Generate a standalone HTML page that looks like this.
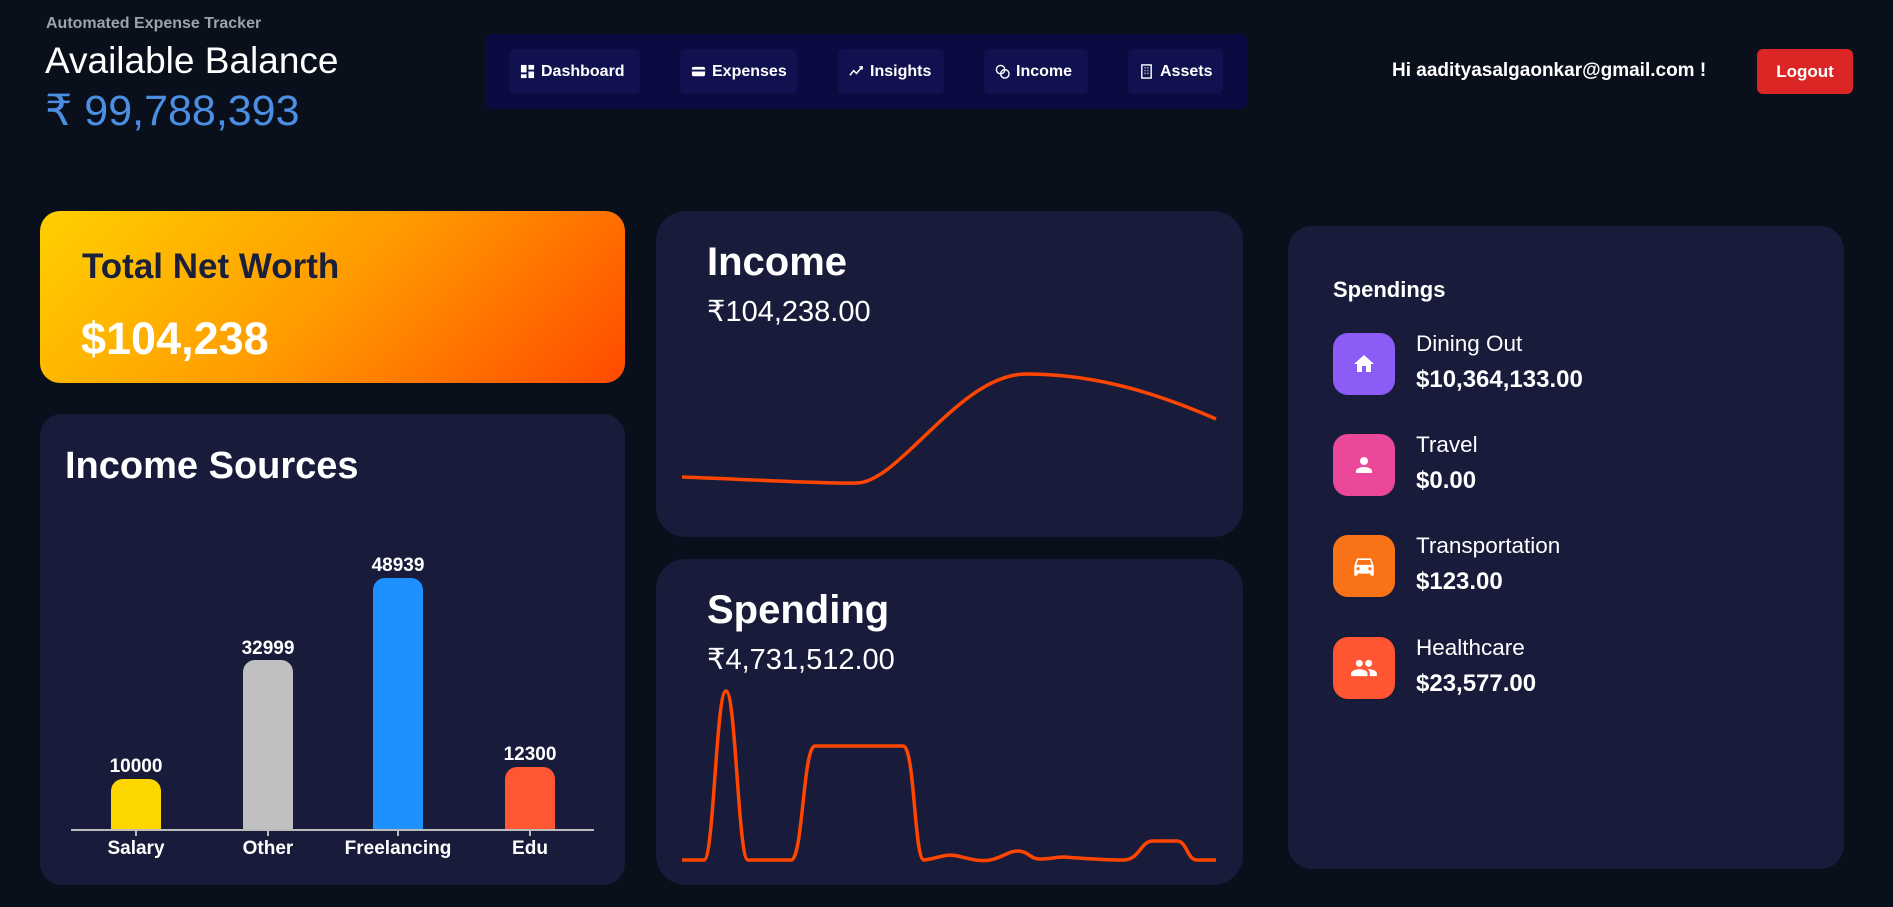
<!DOCTYPE html>
<html><head><meta charset="utf-8"><style>
*{margin:0;padding:0;box-sizing:border-box}
body{width:1893px;height:907px;background:#0a0f1c;font-family:"Liberation Sans",sans-serif;color:#fff;position:relative;overflow:hidden}
.abs{position:absolute}
.card{position:absolute;background:#181c3a}
.nav{left:485px;top:34px;width:762px;height:75px;background:#0b0b42;border-radius:6px}
.btn{position:absolute;top:15px;height:45px;background:#111150;border-radius:6px;font-size:16px;font-weight:bold;display:flex;align-items:center;padding-left:11px;gap:6px}
.btn svg{width:15px;height:15px}
.ic{position:absolute;left:1333px;width:62px;height:62px;border-radius:15px;display:flex;align-items:center;justify-content:center}
.lbl{position:absolute;left:1416px;font-size:22.5px}
.amt{position:absolute;left:1416px;font-size:24px;font-weight:bold}
</style></head><body>
<div class="abs" style="left:46px;top:15px;font-size:16px;font-weight:bold;color:#9ca3af">Automated Expense Tracker</div>
<div class="abs" style="left:45px;top:40px;font-size:37px">Available Balance</div>
<div class="abs" style="left:45px;top:86px;font-size:43px;color:#4a8fe2">₹ 99,788,393</div>

<div class="abs nav">
 <div class="btn" style="left:24px;width:131px"><svg viewBox="0 0 16 16" fill="#fff"><rect x="1" y="1" width="6" height="8"/><rect x="9" y="1" width="6" height="5"/><rect x="1" y="11" width="6" height="4"/><rect x="9" y="8" width="6" height="7"/></svg>Dashboard</div>
 <div class="btn" style="left:195px;width:117px"><svg viewBox="0 0 16 16"><rect x="1" y="3" width="14" height="10" rx="2" fill="#fff"/><rect x="1" y="6" width="14" height="2" fill="#111150"/></svg>Expenses</div>
 <div class="btn" style="left:353px;width:106px"><svg viewBox="0 0 16 16" fill="none" stroke="#fff" stroke-width="1.6"><path d="M1 12l4-5 3 3 6-7M11 3h3v3"/></svg>Insights</div>
 <div class="btn" style="left:499px;width:104px"><svg viewBox="0 0 16 16" fill="none" stroke="#fff" stroke-width="1.5"><circle cx="6" cy="6" r="4.5"/><circle cx="10.5" cy="10.5" r="4.5"/></svg>Income</div>
 <div class="btn" style="left:643px;width:95px"><svg viewBox="0 0 16 16" fill="none" stroke="#fff" stroke-width="1.5"><rect x="3" y="1" width="10" height="14"/><path d="M6 4h1M9 4h1M6 7h1M9 7h1M6 10h1M9 10h1"/></svg>Assets</div>
</div>
<div class="abs" style="left:1392px;top:60px;font-size:19px;font-weight:bold">Hi aadityasalgaonkar@gmail.com !</div>
<div class="abs" style="left:1757px;top:49px;width:96px;height:45px;background:#dc2626;border-radius:6px;font-size:17px;font-weight:bold;display:flex;align-items:center;justify-content:center">Logout</div>

<div class="card" style="left:40px;top:211px;width:585px;height:172px;border-radius:20px;background:linear-gradient(135deg,#ffd000 0%,#ff9a00 50%,#ff4a00 100%)">
 <div class="abs" style="left:42px;top:36px;font-size:35px;font-weight:bold;color:#1a1f3a">Total Net Worth</div>
 <div class="abs" style="left:41px;top:102px;font-size:45px;font-weight:bold">$104,238</div>
</div>

<div class="card" style="left:40px;top:414px;width:585px;height:471px;border-radius:22px">
 <div class="abs" style="left:25px;top:31px;font-size:38px;font-weight:bold">Income Sources</div>
</div>
<svg class="abs" style="left:0;top:0" width="700" height="907">
 <g font-family="Liberation Sans" font-weight="bold" font-size="19" fill="#fff" text-anchor="middle">
 <path d="M111 829V791a12 12 0 0 1 12-12h26a12 12 0 0 1 12 12V829Z" fill="#ffd700"/>
 <path d="M243 829V672a12 12 0 0 1 12-12h26a12 12 0 0 1 12 12V829Z" fill="#c0c0c0"/>
 <path d="M373 829V590a12 12 0 0 1 12-12h26a12 12 0 0 1 12 12V829Z" fill="#1e90ff"/>
 <path d="M505 829V779a12 12 0 0 1 12-12h26a12 12 0 0 1 12 12V829Z" fill="#ff5733"/>
 <path d="M71 830H594M136 830v6M268 830v6M398 830v6M530 830v6" stroke="#bbb" stroke-width="2"/>
 <text x="136" y="772">10000</text><text x="268" y="654">32999</text><text x="398" y="571">48939</text><text x="530" y="760">12300</text>
 <text x="136" y="854">Salary</text><text x="268" y="854">Other</text><text x="398" y="854">Freelancing</text><text x="530" y="854">Edu</text>
 </g>
</svg>

<div class="card" style="left:656px;top:211px;width:587px;height:326px;border-radius:30px">
 <div class="abs" style="left:51px;top:29px;font-size:40px;font-weight:bold">Income</div>
 <div class="abs" style="left:51px;top:83px;font-size:29px">₹104,238.00</div>
</div>
<div class="card" style="left:656px;top:559px;width:587px;height:326px;border-radius:30px">
 <div class="abs" style="left:51px;top:29px;font-size:40px;font-weight:bold">Spending</div>
 <div class="abs" style="left:51px;top:83px;font-size:29px">₹4,731,512.00</div>
</div>
<svg class="abs" style="left:0;top:0" width="1893" height="907" fill="none" stroke="#ff4500" stroke-width="3.5">
 <path d="M682 477C760 480 830 484 857 483C900 482 960 374 1026 374C1090 374 1150 390 1216 419"/>
 <path d="M682 860L704 860C714 860 716 691 726 691C736 691 738 860 748 860L791 860C803 860 803 746 815 746L903 746C915 746 914 860 924 860C940 858 945 853 958 856C970 859 980 862 990 860C1002 858 1008 851 1018 851C1028 851 1030 859 1040 859C1050 859 1055 857 1064 857C1080 858 1100 860 1123 860C1140 860 1140 841 1153 841L1177 841C1187 841 1187 860 1197 860L1216 860"/>
</svg>

<div class="card" style="left:1288px;top:226px;width:556px;height:643px;border-radius:24px">
 <div class="abs" style="left:45px;top:51px;font-size:22px;font-weight:bold">Spendings</div>
</div>
<div class="ic" style="top:333px;background:#8b5cf6"><svg width="24" height="24" viewBox="0 0 24 24" fill="#fff"><path d="M10 20v-6h4v6h5v-8h3L12 3 2 12h3v8z"/></svg></div>
<div class="lbl" style="top:331px">Dining Out</div><div class="amt" style="top:366px">$10,364,133.00</div>
<div class="ic" style="top:434px;background:#ec4899"><svg width="24" height="24" viewBox="0 0 24 24" fill="#fff"><path d="M12 12a4 4 0 1 0 0-8 4 4 0 0 0 0 8zm0 2c-2.7 0-8 1.3-8 4v2h16v-2c0-2.7-5.3-4-8-4z"/></svg></div>
<div class="lbl" style="top:432px">Travel</div><div class="amt" style="top:467px">$0.00</div>
<div class="ic" style="top:535px;background:#f97316"><svg width="26" height="26" viewBox="0 0 24 24" fill="#fff"><path d="M18.9 6C18.7 5.4 18.1 5 17.5 5h-11c-.7 0-1.2.4-1.4 1L3 12v8c0 .6.4 1 1 1h1c.6 0 1-.4 1-1v-1h12v1c0 .6.4 1 1 1h1c.6 0 1-.4 1-1v-8l-2.1-6zM6.5 16a1.5 1.5 0 1 1 0-3 1.5 1.5 0 0 1 0 3zm11 0a1.5 1.5 0 1 1 0-3 1.5 1.5 0 0 1 0 3zM5 11l1.5-4.5h11L19 11H5z"/></svg></div>
<div class="lbl" style="top:533px">Transportation</div><div class="amt" style="top:568px">$123.00</div>
<div class="ic" style="top:637px;background:#ff5533"><svg width="28" height="28" viewBox="0 0 24 24" fill="#fff"><path d="M16 11a3 3 0 1 0 0-6 3 3 0 0 0 0 6zm-8 0a3 3 0 1 0 0-6 3 3 0 0 0 0 6zm0 2c-2.3 0-7 1.2-7 3.5V19h14v-2.5C15 14.2 10.3 13 8 13zm8 0c-.3 0-.6 0-1 .1 1.2.8 2 2 2 3.4V19h6v-2.5c0-2.3-4.7-3.5-7-3.5z"/></svg></div>
<div class="lbl" style="top:635px">Healthcare</div><div class="amt" style="top:670px">$23,577.00</div>
</body></html>
